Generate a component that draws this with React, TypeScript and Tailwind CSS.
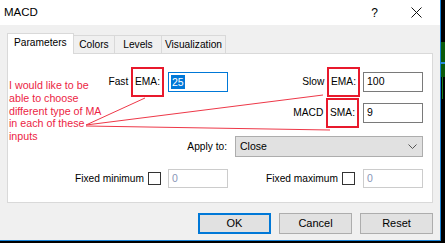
import React from 'react';

const font = { fontFamily: '"Liberation Sans", Arial, sans-serif' };

function RedBox({ children }: { children: React.ReactNode }) {
  return (
    <span className="inline-block -my-[6px] py-[5px] px-[2px] border-2 border-[#e8192c]">{children}</span>
  );
}

function TextBox({ value, focused }: { value: string; focused?: boolean }) {
  return (
    <div
      className={`w-[60px] h-[20px] bg-white flex items-center pl-[2px] text-[10.5px] border ${
        focused ? 'border-[#0078d7]' : 'border-[#7a7a7a]'
      }`}
    >
      {focused ? (
        <span className="bg-[#0078d7] text-white px-[1px] leading-[14px]">{value}</span>
      ) : (
        <span className="px-[1px]">{value}</span>
      )}
    </div>
  );
}

function DisabledBox() {
  return (
    <div className="w-[60px] h-[19px] bg-white border border-[#cccccc] flex items-center pl-[3px] text-[10.5px] text-[#8a96b8]">0</div>
  );
}

function CheckBox() {
  return <div className="w-[13px] h-[13px] bg-white border border-[#333333]" />;
}

export default function App() {
  return (
    <div className="w-[445px] h-[243px] bg-black flex text-[10.2px] text-black" style={font}>
      <div className="w-[441px] h-[241px] bg-[#f0f0f0] border-r border-b border-[#1883d7] flex flex-col">
        {/* title bar */}
        <div className="h-[25px] bg-white flex items-center shrink-0">
          <span className="pl-[4px] text-[11.5px]">MACD</span>
          <span className="ml-auto mr-[33px] text-[12px]">?</span>
          <svg width="11" height="11" viewBox="0 0 11 11" className="mr-[18px]">
            <path d="M0.5 0.5L10.5 10.5M10.5 0.5L0.5 10.5" stroke="#111" strokeWidth="1" />
          </svg>
        </div>

        <div className="flex-1 flex flex-col pl-[7px] pr-[8px] pt-[8px]">
          {/* tabs */}
          <div className="flex items-end h-[20px]">
            <div className="relative z-10 w-[67px] h-[21px] -mb-px bg-white border-l border-t border-r border-[#d9d9d9] flex items-center pl-[6px] pb-[2px]">
              Parameters
            </div>
            <div className="w-[41px] h-[18px] border-t border-r border-[#d9d9d9] flex items-center justify-center">Colors</div>
            <div className="w-[47px] h-[18px] border-t border-r border-[#d9d9d9] flex items-center justify-center">Levels</div>
            <div className="w-[64px] h-[18px] border-t border-r border-[#d9d9d9] flex items-center justify-center">Visualization</div>
          </div>

          {/* panel */}
          <div className="relative w-[426px] h-[150px] bg-white border border-[#d9d9d9] pr-[8px] pt-[18px] flex flex-col">
            <div className="flex h-[20px]">
              <div className="w-[220px] flex items-center justify-end gap-[4px]">
                <span>
                  Fast <RedBox>EMA:</RedBox>
                </span>
                <TextBox value="25" focused />
              </div>
              <div className="w-[195px] flex items-center justify-end gap-[3px]">
                <span>
                  Slow <RedBox>EMA:</RedBox>
                </span>
                <TextBox value="100" />
              </div>
            </div>

            <div className="flex h-[20px] mt-[11px]">
              <div className="w-[220px]" />
              <div className="w-[195px] flex items-center justify-end gap-[4px]">
                <span>
                  MACD <RedBox>SMA:</RedBox>
                </span>
                <TextBox value="9" />
              </div>
            </div>

            <div className="flex h-[21px] mt-[13px] items-center justify-end gap-[8px] w-[415px]">
              <span>Apply to:</span>
              <div className="w-[188px] h-[21px] bg-[#e1e1e1] border border-[#adadad] flex items-center pl-[4px] text-[10.5px]">
                <span>Close</span>
                <svg width="9" height="5" viewBox="0 0 9 5" className="ml-auto mr-[5px]">
                  <path d="M0.5 0.5L4.5 4.5L8.5 0.5" stroke="#555" fill="none" strokeWidth="1" />
                </svg>
              </div>
            </div>

            <div className="flex h-[19px] mt-[12px]">
              <div className="w-[220px] flex items-center justify-end">
                <span>Fixed minimum</span>
                <div className="ml-[4px] mr-[7px]">
                  <CheckBox />
                </div>
                <DisabledBox />
              </div>
              <div className="w-[195px] flex items-center justify-end">
                <span>Fixed maximum</span>
                <div className="ml-[4px] mr-[8px]">
                  <CheckBox />
                </div>
                <DisabledBox />
              </div>
            </div>

            {/* annotation overlay */}
            <div className="absolute left-[1px] top-[25px] text-[#ec1e44] text-[10.7px] leading-[12.75px]">
              <div>I would like to be</div>
              <div>able to choose</div>
              <div>different type of MA</div>
              <div>in each of these</div>
              <div>inputs</div>
            </div>
            <svg className="absolute left-0 top-0 pointer-events-none" width="424" height="148">
              <path
                d="M78 71L137 44M78 71L315 41M78 72L322 76"
                stroke="#ee3848"
                strokeWidth="1"
                fill="none"
              />
            </svg>
          </div>

          {/* buttons */}
          <div className="flex justify-end gap-[8px] mt-[10px] -mr-[1px] text-[11px]">
            <div className="w-[73px] h-[21px] bg-[#e1e1e1] border-2 border-[#0078d7] flex items-center justify-center">OK</div>
            <div className="w-[73px] h-[21px] bg-[#e1e1e1] border border-[#adadad] flex items-center justify-center">Cancel</div>
            <div className="w-[73px] h-[21px] bg-[#e1e1e1] border border-[#adadad] flex items-center justify-center">Reset</div>
          </div>
        </div>
      </div>
      <div className="flex-1 flex flex-col">
        <div className="h-[42px]" />
        <div className="h-[35px] bg-[#0a5a0a] flex flex-col">
          <div className="h-[20px]" />
          <div className="h-[2px] bg-[#2a8ad8]" />
        </div>
        <div className="w-px h-[22px] bg-[#1a7a1a] ml-[1px]" />
      </div>
    </div>
  );
}
